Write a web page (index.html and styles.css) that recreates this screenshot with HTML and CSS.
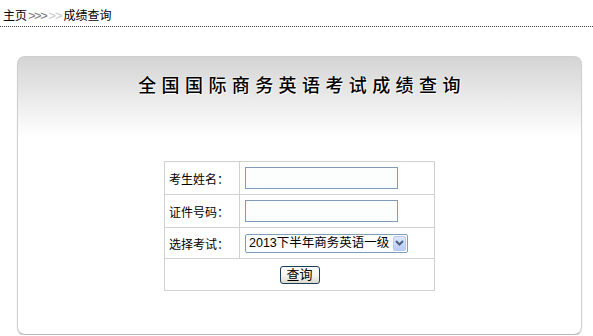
FILE: index.html
```html
<!DOCTYPE html>
<html lang="zh-CN">
<head>
    <meta charset="UTF-8">
    <title>成绩查询</title>
    <link rel="stylesheet" href="styles.css">
</head>
<body>
    <!-- 面包屑 -->
    <div class="crumb">
        <a href="#">主页</a><span class="arrows">&gt;&gt;&gt;</span><span class="arrows light">&gt;&gt;</span><span class="here">成绩查询</span>
    </div>

    <!-- 查询面板 -->
    <div class="panel">
        <h1 class="title">全国国际商务英语考试成绩查询</h1>

        <form class="query" onsubmit="return false;">
            <table class="form-table">
                <tr class="row-a">
                    <td class="label">考生姓名：</td>
                    <td><input type="text" class="txt"></td>
                </tr>
                <tr class="row-a">
                    <td class="label">证件号码：</td>
                    <td><input type="text" class="txt"></td>
                </tr>
                <tr class="row-b">
                    <td class="label">选择考试：</td>
                    <td>
                        <div class="select-wrap">
                            <select class="sel">
                                <option>2013下半年商务英语一级</option>
                            </select>
                            <span class="sel-btn">
                                <svg width="9" height="6" viewBox="0 0 9 6"><path d="M1 1 L4.5 4.5 L8 1" fill="none" stroke="#4d6185" stroke-width="2"/></svg>
                            </span>
                        </div>
                    </td>
                </tr>
                <tr class="row-c">
                    <td colspan="2" class="center"><button type="submit" class="btn">查询</button></td>
                </tr>
            </table>
        </form>
    </div>
</body>
</html>
```

FILE: styles.css
```css
/* 基本 */
* {
    box-sizing: border-box;
}

body {
    margin: 0;
    background: #ffffff;
    color: #000000;
    font-family: "Liberation Sans", "Noto Sans CJK SC", sans-serif;
    font-size: 12px;
}

/* 面包屑 */
.crumb {
    height: 27px;
    padding: 8px 0 0 3px;
    line-height: 16px;
    border-bottom: 1px dotted #444;
}

.crumb a {
    color: #000;
    text-decoration: none;
}

.arrows {
    color: #777;
    font-size: 13px;
    letter-spacing: -1.5px;
    margin-left: 1px;
}

.arrows.light {
    color: #c8c8c8;
    margin: 0 2px 0 2px;
    letter-spacing: -1px;
}

/* 面板 */
.panel {
    margin: 29px 0 0 17px;
    width: 565px;
    height: 279px;
    border: 1px solid #cfcfcf;
    border-bottom-color: #b8b8b8;
    border-radius: 8px;
    background: linear-gradient(#d4d4d4 0, #ececec 45px, #ffffff 80px);
    box-shadow: 0 1px 1px #c8c8c8;
}

.title {
    margin: 0;
    padding: 14px 0 0 5px;
    line-height: 26px;
    font-family: "Noto Sans CJK SC", sans-serif;
    font-size: 18px;
    font-weight: 500;
    letter-spacing: 5.4px;
    text-align: center;
    color: #000;
    text-shadow: 0 0 2px #fff, 1px 1px 1px #fff;
}

/* 表单 */
.query {
    display: flex;
    justify-content: center;
    margin-top: 64px;
}

.form-table {
    width: 271px;
    border-collapse: collapse;
    border: 1px solid #d0d0d0;
}

.form-table td {
    border: 1px solid #d0d0d0;
    padding: 0;
}

.row-a td {
    height: 33px;
}

.row-b td {
    height: 31px;
}

.row-c td {
    height: 32px;
}

.label {
    width: 75px;
    padding-left: 4px !important;
    font-size: 12px;
}

.txt {
    display: block;
    margin-left: 5px;
    width: 153px;
    height: 22px;
    border: 1px solid #7f9db9;
    background: #fcfdfd;
}

.select-wrap {
    position: relative;
    margin-left: 5px;
    width: 163px;
    height: 19px;
}

.sel {
    -webkit-appearance: none;
    appearance: none;
    width: 163px;
    height: 19px;
    padding: 0 0 0 3px;
    border: 1px solid #7f9db9;
    border-radius: 2px;
    background: #fff;
    font-family: "Liberation Sans", "Noto Sans CJK SC", sans-serif;
    font-size: 12.5px;
    color: #000;
}

.sel-btn {
    position: absolute;
    top: 2px;
    right: 2px;
    width: 13px;
    height: 15px;
    display: flex;
    align-items: center;
    justify-content: center;
    border-radius: 2px;
    background: linear-gradient(#dfe8fb, #b9ccf5);
    border: 1px solid #b7c8ef;
    pointer-events: none;
}

.center {
    text-align: center;
}

.btn {
    width: 40px;
    height: 18px;
    padding: 0;
    border: 1px solid #1d3d5c;
    border-radius: 3px;
    background: linear-gradient(#ffffff, #f3f2ec 60%, #dcd9cc);
    font-family: "Liberation Sans", "Noto Sans CJK SC", sans-serif;
    font-size: 13px;
    line-height: 15px;
    color: #000;
    cursor: pointer;
}
```
